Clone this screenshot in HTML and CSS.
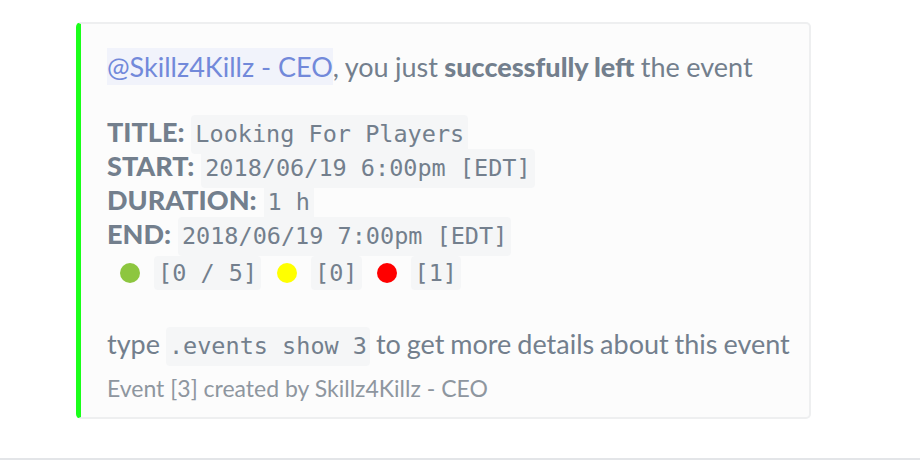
FILE: index.html
```html
<!DOCTYPE html>
<html>
<head>
<meta charset="utf-8">
<link rel="stylesheet" href="styles.css">
</head>
<body>
<div class="page">
  <div class="embed">
    <div class="content">
      <div class="desc">
        <div class="line first"><span class="mention">@Skillz4Killz - CEO</span>, you just <b>successfully left</b> the event</div>
        <div class="fields">
          <div class="line"><b>TITLE:</b> <code>Looking For Players</code></div>
          <div class="line"><b>START:</b> <code>2018/06/19 6:00pm [EDT]</code></div>
          <div class="line"><b>DURATION:</b> <code>1 h</code></div>
          <div class="line"><b>END:</b> <code>2018/06/19 7:00pm [EDT]</code></div>
          <div class="line dots">
            <span class="dot green"></span><code>[0 / 5]</code>
            <span class="dot yellow"></span><code>[0]</code>
            <span class="dot red"></span><code>[1]</code>
          </div>
        </div>
        <div class="line type">type <code>.events show 3</code> to get more details about this event</div>
      </div>
      <div class="footer">Event [3] created by Skillz4Killz - CEO</div>
    </div>
  </div>
</div>
<div class="rule"></div>
</body>
</html>
```
FILE: styles.css
```css
html, body {
  margin: 0;
  padding: 0;
  background: #ffffff;
}
body {
  width: 920px;
  height: 460px;
  position: relative;
  overflow: hidden;
  font-family: Lato, "Noto Sans", sans-serif;
  color: #737f8d;
}
.page {
  padding: 22px 0 0 76px;
  height: 436px;
  box-sizing: border-box;
}
.embed {
  width: 735px;
  height: 397px;
  box-sizing: border-box;
  background: #fcfcfc;
  border: 2px solid #eeeff0;
  border-left: 5px solid #1aff1a;
  border-radius: 5px;
}
.content {
  padding: 25px 20px 0 26px;
}
.line {
  font-size: 27px;
  line-height: 36px;
  white-space: nowrap;
}
.first {
  word-spacing: -0.5px;
}
.mention {
  color: #7289da;
  background: #f1f3fb;
  padding: 2px 0;
  word-spacing: 0;
}
b {
  font-weight: 900;
}
.fields {
  margin-top: 30px;
}
.fields .line {
  line-height: 34px;
  height: 34px;
}
code {
  font-family: "DejaVu Sans Mono", monospace;
  font-size: 23.5px;
  line-height: 1;
  background: #f5f6f7;
  border-radius: 4px;
  padding: 5px 4px 6px;
  word-spacing: 0;
}
.type code {
  padding: 5px 3px 6px;
}
.dots {
  display: flex;
  align-items: center;
  height: 40px !important;
  margin-top: 2px;
  padding-left: 13px;
}
.dots code {
  line-height: 34px;
  padding: 0 4px;
  margin-left: 14px;
  margin-right: 16px;
}
.dots code:nth-of-type(2) {
  margin-right: 15px;
}
.dot {
  width: 20px;
  height: 20px;
  border-radius: 50%;
  display: inline-block;
}
.green { background: #8dc63f; }
.yellow { background: #ffff00; }
.red { background: #ff0000; }
.type {
  margin-top: 33px;
  word-spacing: -1px;
}
.footer {
  margin-top: 12px;
  font-size: 23px;
  line-height: 28px;
  color: #8e969f;
}
.rule {
  position: absolute;
  left: 0;
  right: 0;
  top: 458px;
  height: 2px;
  background: #e3e5e8;
}
```
